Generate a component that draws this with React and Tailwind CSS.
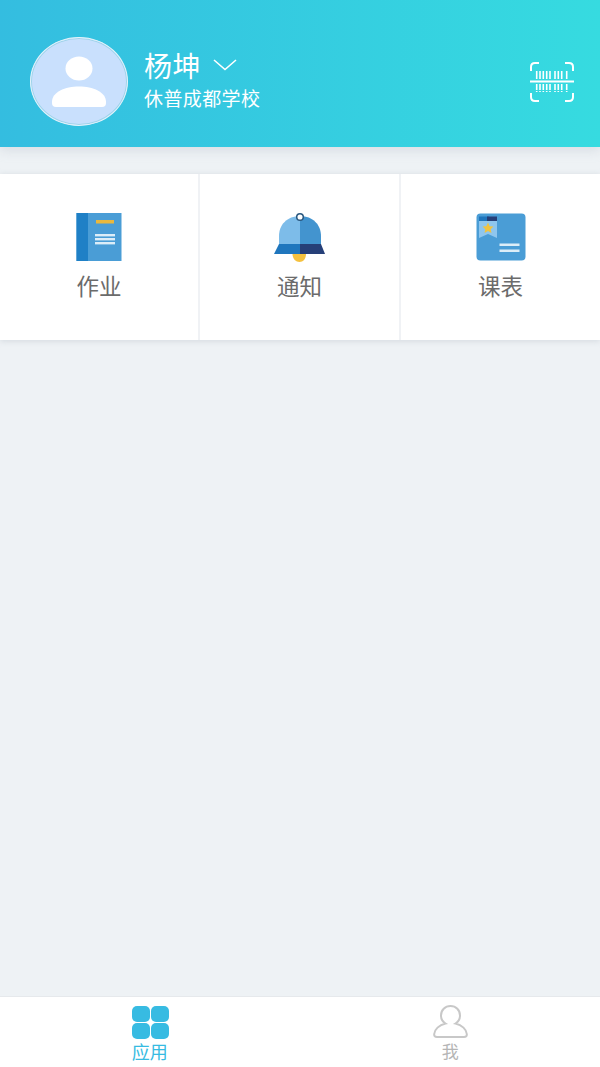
const CJK = { fontFamily: '"Noto Sans CJK SC", "Liberation Sans", sans-serif' };

function Avatar() {
  return (
    <div className="w-[98px] h-[89px] rounded-[50%] bg-[#c9e0fd] border border-[#e4f3fb] shadow-[inset_0_0_0_1px_#9fd3ea] flex items-center justify-center shrink-0">
      <svg width="56" height="52" viewBox="0 0 56 52">
        <ellipse cx="28" cy="12.500" rx="13.500" ry="12" fill="#fff" />
        <path d="M1 46C1 36 14 30.500 28 30.500S55 36 55 46V47Q55 51 51 51H5Q1 51 1 47Z" fill="#fff" />
      </svg>
    </div>
  );
}

function Chevron() {
  return (
    <svg width="24" height="12" viewBox="0 0 24 12" fill="none">
      <path d="M1 1 12 10.500 23 1" stroke="#fff" strokeWidth="1.600" />
    </svg>
  );
}

function Barcode() {
  const bars = [6.7, 10, 13.3, 16.7, 20, 25, 28.3, 31.7, 36.7];
  return (
    <svg width="44" height="40" viewBox="0 0 44 40" fill="none" stroke="#fff">
      <path d="M1 9V5Q1 1 5 1H9M35 1H39Q43 1 43 5V9M1 31V35Q1 39 5 39H9M35 39H39Q43 39 43 35V31" strokeWidth="2" />
      <path d="M0 19.500H44" strokeWidth="1.800" />
      {bars.map((x) => (
        <path key={x} d={`M${x} 9V17`} strokeWidth="1.600" />
      ))}
      {bars.map((x) => (
        <path key={x} d={`M${x} 22V30`} strokeWidth="1.600" strokeDasharray="6 1 1" />
      ))}
    </svg>
  );
}

function BookIcon() {
  return (
    <svg width="46" height="50" viewBox="0 0 46 50">
      <rect x="0.500" y="1" width="45" height="48" fill="#4a9dd6" />
      <rect x="0.500" y="1" width="11.500" height="48" fill="#1f80c6" />
      <rect x="20" y="8" width="18" height="3.500" fill="#e9b83e" />
      <rect x="19" y="22" width="20" height="2.400" fill="#dcedf8" />
      <rect x="19" y="26" width="20" height="2.400" fill="#dcedf8" />
      <rect x="19" y="30" width="20" height="2.400" fill="#dcedf8" />
    </svg>
  );
}

function BellIcon() {
  return (
    <svg width="52" height="50" viewBox="0 0 52 50">
      <path d="M26 4C13 4 5 13 5 24V33H26Z" fill="#7dbce9" />
      <path d="M26 4C39 4 47 13 47 24V33H26Z" fill="#4394cf" />
      <path d="M5 32H26V42H0Z" fill="#1f76bd" />
      <path d="M26 32H47L51 42H26Z" fill="#263f78" />
      <path d="M18.500 42H32C32 47 29 50 25.500 50S18.500 47 18.500 42Z" fill="#f5c13e" />
      <circle cx="26" cy="5" r="3.300" fill="#fff" stroke="#29577f" strokeWidth="1.500" />
    </svg>
  );
}

function ScheduleIcon() {
  return (
    <svg width="50" height="48" viewBox="0 0 50 48">
      <rect x="0.500" y="0.500" width="49" height="47" rx="4" fill="#4a9dd6" />
      <path d="M3 8H21V25L12 21 3 25Z" fill="#8ec6ee" />
      <rect x="3" y="3.500" width="10" height="4.500" fill="#1f76bd" />
      <rect x="11" y="3.500" width="10" height="4.500" fill="#263f78" />
      <path d="M12 9.500 13.700 13.200 17.500 13.600 14.700 16.200 15.500 20 12 18 8.500 20 9.300 16.200 6.500 13.600 10.300 13.200Z" fill="#f1c33f" />
      <rect x="23.500" y="30.500" width="20" height="2.500" fill="#dcedf8" />
      <rect x="23.500" y="36.500" width="20" height="2.500" fill="#dcedf8" />
    </svg>
  );
}

function AppsIcon() {
  return (
    <svg className="ml-[2px]" width="37" height="33" viewBox="0 0 37 33" fill="#37bbe2">
      <rect x="0" y="0" width="18" height="16" rx="5" />
      <rect x="19" y="0" width="18" height="16" rx="5" />
      <rect x="0" y="17" width="18" height="16" rx="5" />
      <rect x="19" y="17" width="18" height="16" rx="5" />
    </svg>
  );
}

function MeIcon() {
  return (
    <svg width="35" height="33" viewBox="0 0 35 33" fill="none" stroke="#c8c8c8" strokeWidth="2">
      <path d="M17.500 1C12 1 8 5 8 10.500C8 14 10 17 12.500 18.500C6 20 1.500 24.500 1.200 29C1 31 2 32 4 32H31C33 32 34 31 33.800 29C33.500 24.500 29 20 22.500 18.500C25 17 27 14 27 10.500C27 5 23 1 17.500 1Z" />
    </svg>
  );
}

function Tile({ icon, label, className }) {
  return (
    <div className={`flex flex-col items-center pt-[38px] ${className}`}>
      <div className="h-[50px] flex items-center justify-center">{icon}</div>
      <span className="mt-[9px] text-[22.5px] leading-[28px] text-[#6b6b6b]">{label}</span>
    </div>
  );
}

export default function App() {
  return (
    <div style={CJK} className="w-[600px] h-[1067px] bg-[#eef2f5] flex flex-col overflow-hidden">
      <header className="h-[147px] shrink-0 bg-gradient-to-r from-[#34bde0] to-[#36dbe0] flex items-center pl-[30px] pr-[26px] pt-[16px] shadow-[0_4px_10px_rgba(180,190,200,0.35)]">
        <Avatar />
        <div className="ml-[16px] flex-1 flex flex-col text-white mb-[8px]">
          <div className="flex items-center h-[40px]">
            <span className="text-[28px] leading-[40px] tracking-[0.5px]">杨坤</span>
            <span className="ml-[12px] mt-[1px] flex"><Chevron /></span>
          </div>
          <span className="text-[19px] leading-[26px] tracking-[0.4px]">休普成都学校</span>
        </div>
        <Barcode />
      </header>

      <section className="mt-[27px] h-[166px] shrink-0 bg-white flex shadow-[0_1px_6px_rgba(170,180,190,0.4)]">
        <Tile icon={<BookIcon />} label="作业" className="w-[200px] border-r-2 border-[#f0f2f5]" />
        <Tile icon={<BellIcon />} label="通知" className="w-[201px] border-r-2 border-[#f0f2f5]" />
        <Tile icon={<ScheduleIcon />} label="课表" className="flex-1" />
      </section>

      <div className="flex-1" />

      <nav className="h-[71px] shrink-0 bg-white border-t border-[#e6e9ec] flex">
        <div className="flex-1 flex flex-col items-center pt-[9px]">
          <AppsIcon />
          <span className="text-[18px] leading-[22px] mt-[1px] text-[#37bbe2]">应用</span>
        </div>
        <div className="flex-1 flex flex-col items-center pt-[8px] pl-[1px]">
          <MeIcon />
          <span className="text-[17px] leading-[22px] mt-[2px] text-[#b5b5b5]">我</span>
        </div>
      </nav>
    </div>
  );
}
